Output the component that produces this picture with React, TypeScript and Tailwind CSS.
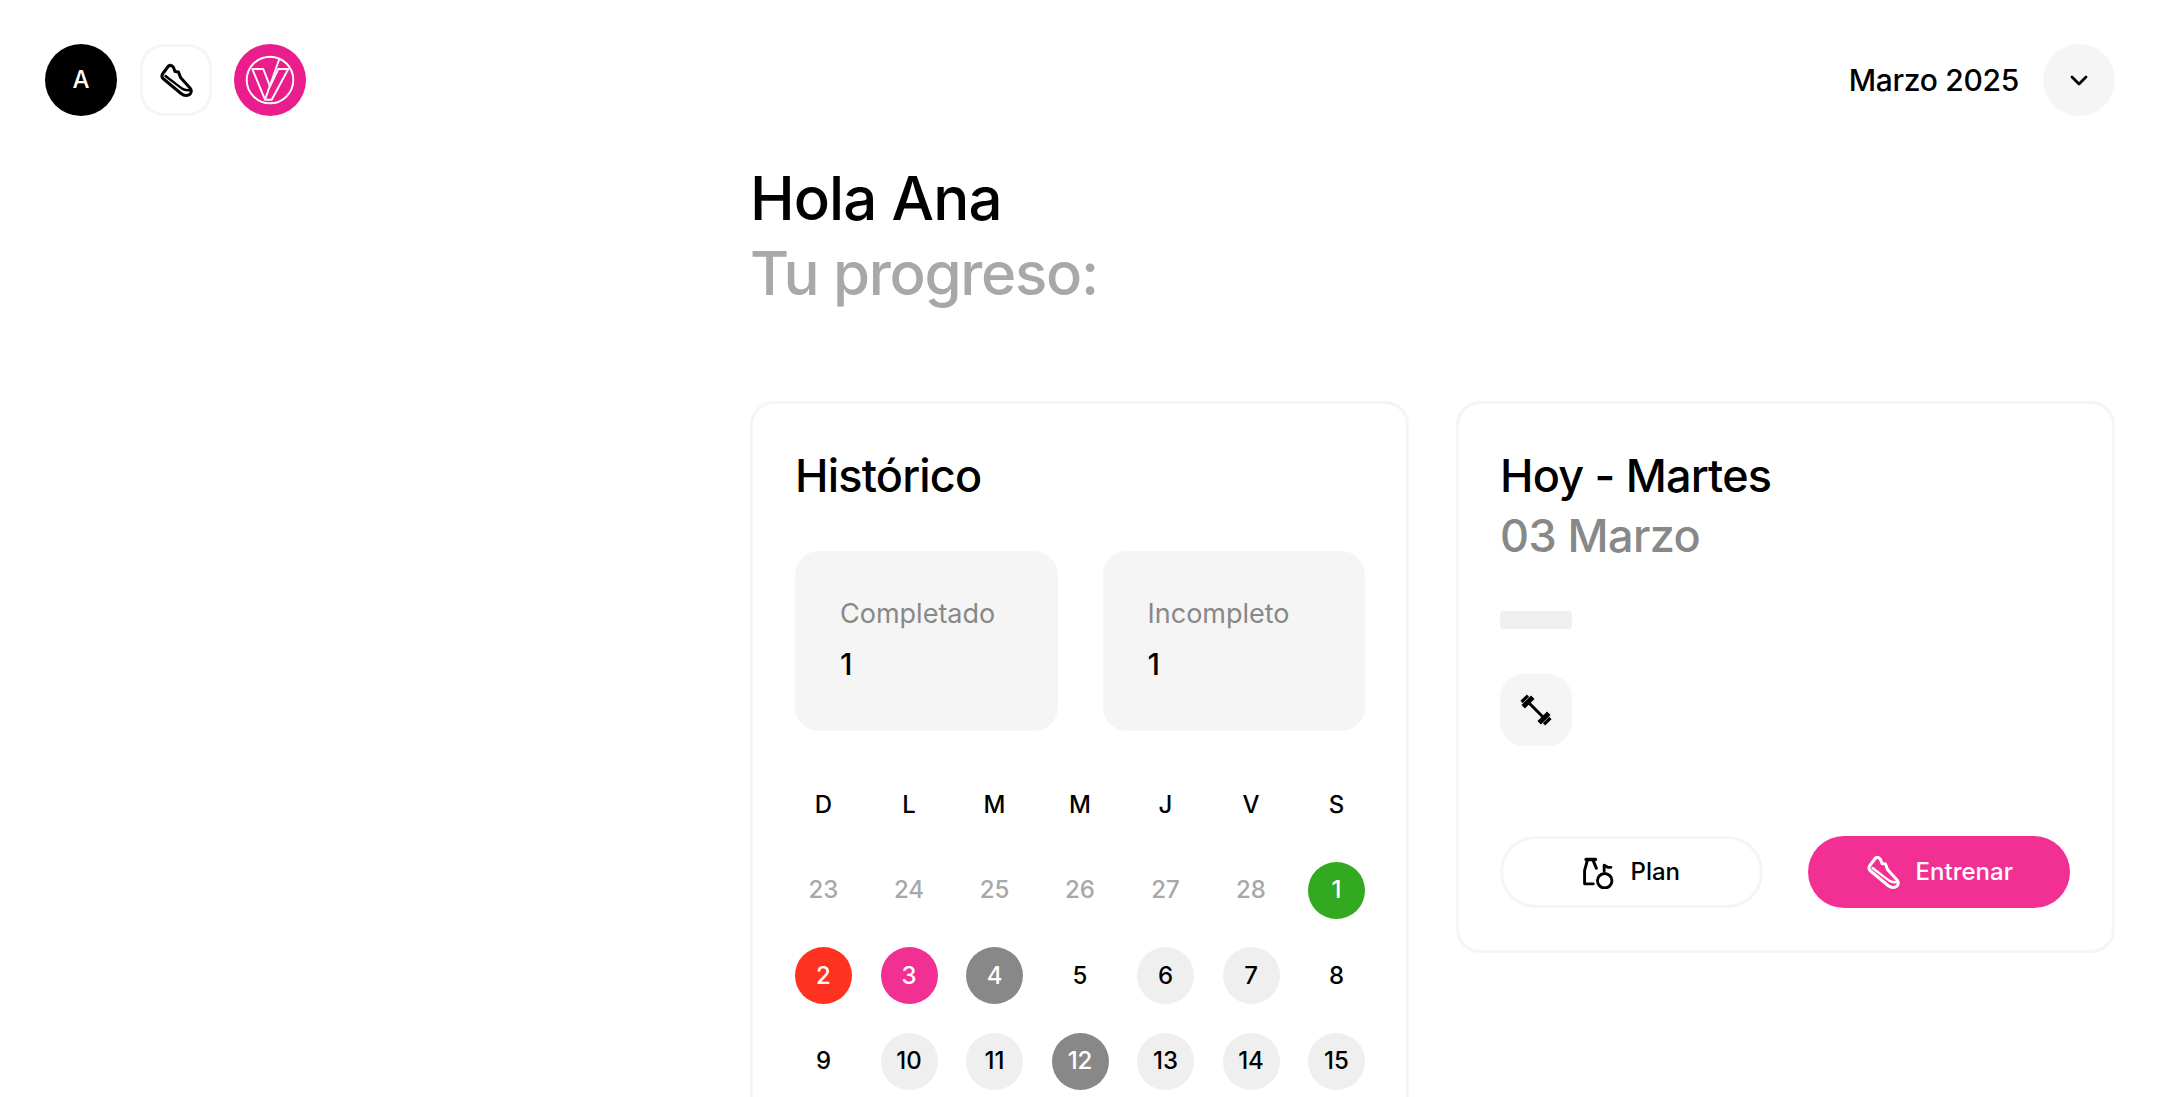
import React from "react";

function Shoe({ className }: { className?: string }) {
  return (
    <svg viewBox="0 0 36 36" fill="none" stroke="currentColor" strokeWidth="3" strokeLinecap="round" strokeLinejoin="round" className={className}>
      <path d="M10.5 4 L4.5 12 C3.5 14 3.5 15 5 16.5 L23 31.5 C25.5 33.5 29 34 31.5 32.5 C33.8 30.5 33.8 28 32 26 L22.5 15.5 L20.5 10 L17 9.5 L15.5 5.5 C14 3.5 12 3 10.5 4 Z" />
      <path d="M7.5 14 C13 18 19 23 24 26.5 C26 28 29 28.5 32 28" strokeWidth="2.4" />
    </svg>
  );
}

function Logo() {
  return (
    <svg viewBox="0 0 72 72" fill="none" stroke="#fff" strokeWidth="1.9" strokeLinejoin="round" className="w-[72px] h-[72px]">
      <circle cx="36" cy="36" r="23.3" />
      <path d="M18.3 25 H29.3 L36 42.3 L44.3 25 H54.3 L37.7 55.7 H31 Z" />
      <path d="M31 55.7 L45.3 15" />
    </svg>
  );
}

function Barbell() {
  return (
    <svg viewBox="0 0 30 30" fill="none" stroke="currentColor" strokeLinecap="butt" className="w-[32px] h-[32px]">
      <path d="M7 7 L23 23" strokeWidth="2.8" />
      <path d="M3 12 L12 3" strokeWidth="4.6" />
      <path d="M1.5 7.5 L7.5 1.5" strokeWidth="3" />
      <path d="M18 27 L27 18" strokeWidth="4.6" />
      <path d="M22.5 28.5 L28.5 22.5" strokeWidth="3" />
    </svg>
  );
}

function PlanIcon() {
  return (
    <svg viewBox="0 0 32 32" fill="none" stroke="currentColor" strokeWidth="2.8" strokeLinecap="round" strokeLinejoin="round" className="w-[33px] h-[33px]">
      <path d="M4 3.5 H13" strokeWidth="3.4" />
      <path d="M5 5 L2.5 14 V27 H11" />
      <path d="M11 5 L14 12" />
      <circle cx="22" cy="24" r="7" />
      <path d="M21.5 10 V14.5" />
      <path d="M21.5 9 L25 11 H28" />
    </svg>
  );
}

type Kind = "muted" | "green" | "red" | "pink" | "gray" | "light";

function Day({ n, kind }: { n: number; kind?: Kind }) {
  const styles: Record<string, string> = {
    muted: "text-[#a8a8a8]",
    green: "bg-[#33a91f] text-white",
    red: "bg-[#ff3120] text-white",
    pink: "bg-[#f23093] text-white",
    gray: "bg-[#888888] text-white",
    light: "bg-[#efefef] text-black",
    none: "text-black",
  };
  return (
    <div className={`w-[57px] h-[57px] rounded-full flex items-center justify-center ${styles[kind ?? "none"]}`}>{n}</div>
  );
}

const days: { n: number; kind?: Kind }[] = [
  { n: 23, kind: "muted" }, { n: 24, kind: "muted" }, { n: 25, kind: "muted" }, { n: 26, kind: "muted" }, { n: 27, kind: "muted" }, { n: 28, kind: "muted" }, { n: 1, kind: "green" },
  { n: 2, kind: "red" }, { n: 3, kind: "pink" }, { n: 4, kind: "gray" }, { n: 5 }, { n: 6, kind: "light" }, { n: 7, kind: "light" }, { n: 8 },
  { n: 9 }, { n: 10, kind: "light" }, { n: 11, kind: "light" }, { n: 12, kind: "gray" }, { n: 13, kind: "light" }, { n: 14, kind: "light" }, { n: 15, kind: "light" },
];

export default function App() {
  return (
    <div className="h-[1097px] overflow-hidden bg-white text-black font-['Inter',sans-serif] font-[450]">
      <header className="flex items-center justify-between px-[45px] pt-[44px]">
        <div className="flex items-center gap-[22.5px]">
          <div className="w-[72px] h-[72px] rounded-full bg-black text-white flex items-center justify-center text-[24px]">A</div>
          <div className="w-[72px] h-[72px] rounded-[24px] border-[3px] border-[#f5f5f5] flex items-center justify-center">
            <Shoe className="w-[36px] h-[36px]" />
          </div>
          <div className="w-[72px] h-[72px] rounded-full bg-[#e91e8c]">
            <Logo />
          </div>
        </div>
        <div className="flex items-center gap-[24px]">
          <span className="text-[30px] leading-none tracking-[-0.3px]">Marzo 2025</span>
          <div className="w-[72px] h-[72px] rounded-full bg-[#f5f5f5] flex items-center justify-center">
            <svg viewBox="0 0 24 24" fill="none" stroke="currentColor" strokeWidth="2.8" strokeLinecap="round" strokeLinejoin="round" className="w-[24px] h-[24px]"><path d="M5 9 L12 16 L19 9" /></svg>
          </div>
        </div>
      </header>

      <main className="ml-[750px] mr-[45px]">
        <h1 className="mt-[45px] text-[60px] font-medium leading-[75px] tracking-[-0.9px]">
          <div>Hola Ana</div>
          <div className="text-[#a8a8a8] tracking-[-1.3px]">Tu progreso:</div>
        </h1>
        <div className="mt-[90px] grid grid-cols-2 gap-[47px] items-start">
          <section className="rounded-[24px] border-[3px] border-[#f5f5f5] pl-[42px] pr-[41px] pt-[42px] pb-[42px]">
            <h2 className="text-[45px] font-medium leading-[60px] tracking-[-0.8px]">Histórico</h2>
            <div className="mt-[45px] grid grid-cols-2 gap-[45px]">
              <div className="h-[180px] rounded-[24px] bg-[#f5f5f5] px-[45px] flex flex-col justify-center gap-[14px] pb-[5px]">
                <div className="text-[#888888] text-[27px] leading-[36px] font-normal">Completado</div>
                <div className="text-[30px] leading-[36px]">1</div>
              </div>
              <div className="h-[180px] rounded-[24px] bg-[#f5f5f5] px-[45px] flex flex-col justify-center gap-[14px] pb-[5px]">
                <div className="text-[#888888] text-[27px] leading-[36px] font-normal">Incompleto</div>
                <div className="text-[30px] leading-[36px]">1</div>
              </div>
            </div>
            <div className="mt-[45px] grid grid-cols-[repeat(7,57px)] justify-between gap-y-[28.5px] text-[24px]">
              {["D", "L", "M", "M", "J", "V", "S"].map((d, i) => (
                <div key={i} className="h-[57px] flex items-center justify-center">{d}</div>
              ))}
              {days.map((d) => (
                <Day key={d.n} n={d.n} kind={d.kind} />
              ))}
            </div>
          </section>

          <section className="rounded-[24px] border-[3px] border-[#f5f5f5] pl-[41px] pr-[42px] pt-[42px] pb-[42px]">
            <h2 className="text-[45px] font-medium leading-[60px] tracking-[-0.8px]">Hoy - Martes</h2>
            <div className="text-[45px] font-medium leading-[60px] tracking-[-0.6px] text-[#888888]">03 Marzo</div>
            <div className="mt-[45px] w-[72px] h-[18px] rounded-[4px] bg-[#efefef]" />
            <div className="mt-[45px] w-[72px] h-[72px] rounded-[24px] bg-[#f5f5f5] flex items-center justify-center">
              <Barbell />
            </div>
            <div className="mt-[90px] grid grid-cols-2 gap-[45px]">
              <button className="h-[72px] rounded-full border-[3px] border-[#f5f5f5] flex items-center justify-center gap-[15px] text-[24px]">
                <PlanIcon />
                Plan
              </button>
              <button className="h-[72px] rounded-full bg-[#f23093] text-white flex items-center justify-center gap-[15px] text-[24px]">
                <Shoe className="w-[36px] h-[36px]" />
                Entrenar
              </button>
            </div>
          </section>
        </div>
      </main>
    </div>
  );
}
